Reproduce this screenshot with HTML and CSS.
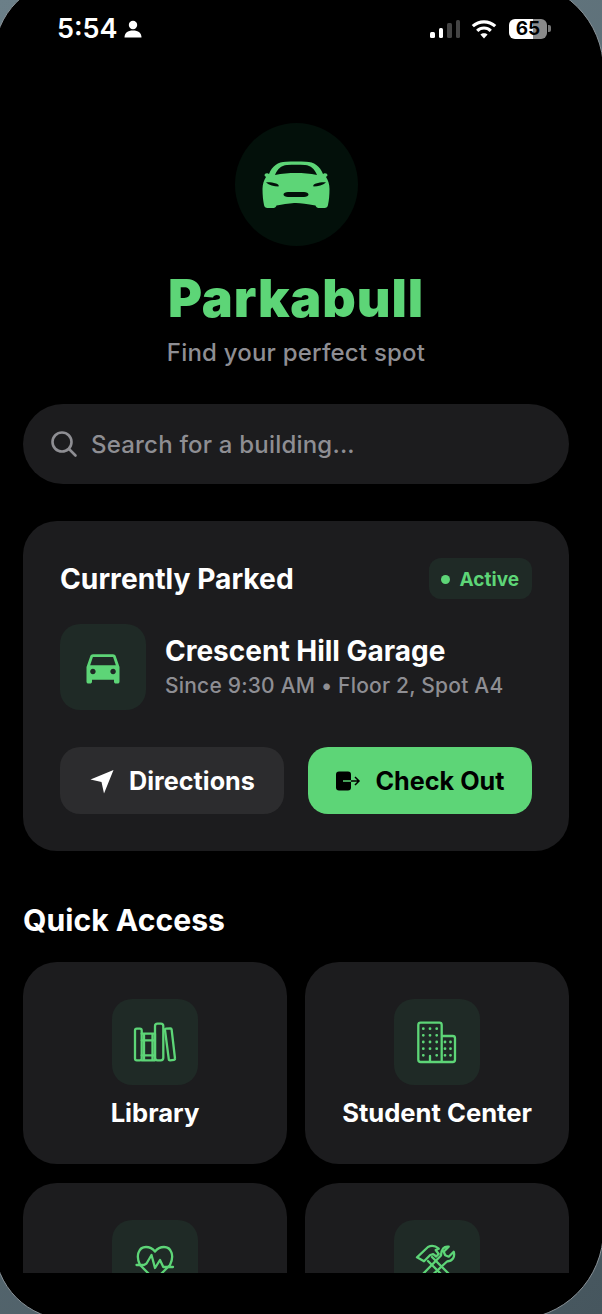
FILE: index.html
```html
<!DOCTYPE html>
<html>
<head>
  <title>Parkabull</title>
  <link rel="stylesheet" href="styles.css">
</head>
<body>
  <div class="phone">
    <div class="status-bar">
      <div class="status-left">
        <span class="clock">5:54</span>
        <svg class="person" viewBox="0 0 18 18"><circle cx="9" cy="5" r="4.2"/><path d="M.5 17.500c0-4.500 3.200-7 8.500-7s8.500 2.500 8.500 7z"/></svg>
      </div>
      <div class="status-right">
        <div class="signal">
          <i class="bar b1"></i><i class="bar b2"></i><i class="bar b3 off"></i><i class="bar b4 off"></i>
        </div>
        <svg class="wifi" viewBox="0 0 26 20"><path d="M1.800 7.200C4.700 4.500 8.600 2.800 13 2.800s8.300 1.700 11.200 4.400"/><path d="M6.200 11.800C8 10.100 10.400 9 13 9s5 1.100 6.800 2.800"/><path class="wifi-dot" d="M13 19.500l-3.600-3.900c1-.8 2.200-1.300 3.600-1.300s2.600.5 3.600 1.300z"/></svg>
        <div class="battery"><span>65</span></div>
        <i class="battery-nub"></i>
      </div>
    </div>

    <div class="screen">
      <div class="hero">
        <div class="logo">
          <svg width="70" height="48" viewBox="0 0 70 48"><path fill-rule="evenodd" d="M8 13C11 5 17 1 25 .8 31 .4 39 .4 45 .8 53 1 59 5 62 13l1-.5c2-.5 3.500.5 3.500 2l-1.500 1.500c2 3 3.500 7 3.500 12 0 6-.5 11-1.500 16-.3 2-1.500 3-3.500 3h-6c-1.500 0-2.500-1-3-2.500C46 43 40 42 35 42s-11 1-19.500 2.500C15 46 14 47 12.500 47h-6c-2 0-3.200-1-3.500-3C2 39 1.500 34 1.500 28c0-5 1.500-9 3.500-12L3.500 14.500c0-1.500 1.500-2.500 3.500-2zM14 14c7-1.500 14-2 21-2s14 .5 21 2c-2.500-6-6-9.500-12-10-6-.4-12-.4-18 0-6 .5-9.500 4-12 10zM5 21.500c3 2.500 8 4 12.500 4 .8-1.500-.5-2.500-2.500-3-3.500-.8-7-1.500-10-1zM65 21.500c-3 2.500-8 4-12.500 4-.8-1.500.5-2.500 2.500-3 3.500-.8 7-1.500 10-1zM27 31c-2.500 0-4.500 1-4.500 2.500S24.500 36 27 36h16c2.500 0 4.500-1 4.500-2.500S45.500 31 43 31z"/></svg>
        </div>
        <h1 class="brand">Parkabull</h1>
        <p class="tagline">Find your perfect spot</p>
      </div>

      <div class="search">
        <svg width="28" height="28" viewBox="0 0 28 28" fill="none" stroke="#8e8e93" stroke-width="2.600" stroke-linecap="round"><circle cx="12" cy="12" r="9.500"/><path d="M19 19l6.500 6.500"/></svg>
        <span>Search for a building...</span>
      </div>

      <div class="parked-card">
        <div class="parked-head">
          <h2>Currently Parked</h2>
          <div class="badge"><i class="dot"></i>Active</div>
        </div>
        <div class="parked-info">
          <div class="tile">
            <svg width="44" height="44" viewBox="0 0 24 24" fill="#5dd577"><path d="M18.920 6.010C18.720 5.420 18.160 5 17.500 5h-11c-.66 0-1.210.42-1.420 1.010L3 12v8c0 .55.45 1 1 1h1c.55 0 1-.45 1-1v-1h12v1c0 .55.45 1 1 1h1c.55 0 1-.45 1-1v-8l-2.080-5.990zM6.500 16c-.83 0-1.500-.67-1.500-1.500S5.670 13 6.500 13s1.500.67 1.500 1.500S7.330 16 6.500 16zm11 0c-.83 0-1.500-.67-1.500-1.500s.67-1.500 1.500-1.500 1.500.67 1.500 1.500-.67 1.500-1.500 1.500zM5 11l1.500-4.500h11L19 11H5z"/></svg>
          </div>
          <div>
            <div class="garage">Crescent Hill Garage</div>
            <div class="since">Since 9:30 AM • Floor 2, Spot A4</div>
          </div>
        </div>
        <div class="actions">
          <div class="btn btn-dark">
            <svg width="26" height="26" viewBox="0 0 26 26" fill="#fff"><path d="M1.500 11.500 24.500 2 15 25.500l-2.500-11.500z"/></svg>
            Directions
          </div>
          <div class="btn btn-green">
            <svg width="26" height="24" viewBox="0 0 26 24"><rect x="1" y="2.500" width="15" height="19" rx="3" fill="#000"/><path d="M8 12h16" stroke="#5dd577" stroke-width="1.500"/><path d="M16 12h8M20 8l4 4-4 4" fill="none" stroke="#000" stroke-width="1.500"/></svg>
            Check Out
          </div>
        </div>
      </div>

      <h2 class="section-title">Quick Access</h2>
      <div class="quick-grid">
        <div class="quick-card">
          <div class="tile">
            <svg class="line-icon" width="50" height="50" viewBox="0 0 50 50"><rect x="5" y="11.700" width="6.700" height="31.600" rx="1.800"/><path d="M11.700 16.700H25V43.300H11.700M11.700 23.300H25M11.700 38.300H25M14 16.700V43.300M22.500 16.700V43.300"/><rect x="25" y="6.700" width="8.300" height="36.600" rx="2.500"/><path d="M36 11.700l4.500-.4c.6 0 1 .3 1.100 1L45 41.500c.1.700-.2 1.200-.9 1.300l-4 .5c-.7.100-1.200-.3-1.300-1L35 13c-.1-.7.300-1.200 1-1.300z"/></svg>
          </div>
          <div class="quick-label">Library</div>
        </div>
        <div class="quick-card">
          <div class="tile">
            <svg class="line-icon" width="50" height="50" viewBox="0 0 50 50"><path d="M29.700 45V8c0-1.300-1-2.300-2.300-2.300H8.600C7.300 5.700 6.300 6.700 6.300 8v34.700c0 1.300 1 2.300 2.300 2.300zM29.700 19H40.700c1.300 0 2.300 1 2.300 2.300v21.400c0 1.300-1 2.300-2.300 2.300H29.700M18 39v6"/><path class="dots" d="M11.300 11.700h.01M18 11.700h.01M24.700 11.700h.01M11.300 18.300h.01M18 18.300h.01M24.700 18.300h.01M11.300 25h.01M18 25h.01M24.700 25h.01M11.300 31.700h.01M18 31.700h.01M24.700 31.700h.01M11.300 38.300h.01M24.700 38.300h.01M33 25h.01M38.500 25h.01M33 31.700h.01M38.500 31.700h.01M33 38.300h.01M38.500 38.300h.01"/></svg>
          </div>
          <div class="quick-label">Student Center</div>
        </div>
        <div class="quick-card">
          <div class="tile">
            <svg class="line-icon" width="50" height="50" viewBox="0 0 50 50"><path d="M10 27C5.500 18 8.500 9 16 9c4 0 7 2 9 4.500C27 11 30 9 34 9c7.500 0 10.500 9 6 18L25 42z"/><path d="M6.500 27H14l2.500-1.500 5-8.500L25 30l5-8 3.300 7H43"/></svg>
          </div>
        </div>
        <div class="quick-card">
          <div class="tile">
            <svg class="line-icon" width="50" height="50" viewBox="0 0 50 50"><path d="M5 19.300 16 9c3-1.500 7-1.500 10.700 1.700l-3 1.300 3 4-2.500 2.500-3-2.300-3 .8-6.200 6.300zM20 19l20 20-4 4-20-20"/><path d="M36.700 8.700l-5 5 1.500 3.500 3.500 1.500 5-5c1.500 5-1 9.800-6.700 9.800L15 42l-5-5 19-19.500c0-5.800 3-9.800 7.700-8.800z"/></svg>
          </div>
        </div>
      </div>
    </div>
  </div>
</body>
</html>
```

FILE: styles.css
```css
* {
  box-sizing: border-box;
}
html, body {
  height: 100%;
}
body {
  margin: 0;
  overflow: hidden;
  font-family: Inter, "Liberation Sans", sans-serif;
  color: #fff;
  background: linear-gradient(135deg, #6b7f88, #46565e);
}
.phone {
  width: 610px;
  height: 1340px;
  margin: -20px 0 0 -6px;
  padding: 19px 0 46px;
  background-color: #000;
  border: 1px solid #8a9399;
  border-radius: 75px 90px 90px 75px;
  display: flex;
  flex-direction: column;
}

/* status bar */
.status-bar {
  display: flex;
  justify-content: space-between;
  align-items: center;
  flex: none;
  height: 57px;
  padding: 0 52px 0 62px;
}
.status-left {
  display: flex;
  align-items: center;
  gap: 6px;
}
.clock {
  font-size: 27px;
  font-weight: 600;
}
.person {
  width: 18px;
  height: 18px;
  fill: #fff;
}
.status-right {
  display: flex;
  align-items: center;
}
.signal {
  display: flex;
  align-items: flex-end;
  gap: 4px;
  height: 19px;
  margin-right: 11px;
}
.bar {
  width: 4.500px;
  background-color: #fff;
  border-radius: 1.500px;
}
.bar.off {
  background-color: #444;
}
.b1 { height: 6px; }
.b2 { height: 10px; }
.b3 { height: 15px; }
.b4 { height: 18px; }
.wifi {
  width: 26px;
  height: 20px;
  margin-right: 12px;
  fill: none;
  stroke: #fff;
  stroke-width: 3.200;
}
.wifi-dot {
  fill: #fff;
  stroke: none;
}
.battery {
  width: 38px;
  height: 20px;
  border-radius: 6px;
  background: linear-gradient(90deg, #fff 62%, #8a8a8a 62%);
  color: #000;
  font-size: 19px;
  font-weight: 700;
  line-height: 20px;
  text-align: center;
}
.battery-nub {
  width: 3px;
  height: 7px;
  margin-left: 1px;
  background-color: #777;
  border-radius: 0 2px 2px 0;
}

/* scroll area */
.screen {
  flex: 1;
  overflow: hidden;
  padding: 0 34px 0 28px;
}
.hero {
  display: flex;
  flex-direction: column;
  align-items: center;
  padding-top: 66px;
}
.logo {
  width: 123px;
  height: 123px;
  border-radius: 50%;
  background-color: #03100a;
  display: flex;
  align-items: center;
  justify-content: center;
}
.logo svg {
  fill: #5dd577;
}
.brand {
  margin: 18px 0 0;
  font-size: 52px;
  line-height: 70px;
  font-weight: 900;
  letter-spacing: .9px;
  color: #5dd577;
}
.tagline {
  margin: 4px 0 -1px;
  font-size: 24px;
  line-height: 30px;
  font-weight: 500;
  letter-spacing: .2px;
  color: #8e8e93;
}

.search {
  display: flex;
  align-items: center;
  gap: 13px;
  height: 80px;
  margin-top: 37px;
  padding-left: 27px;
  border-radius: 40px;
  background-color: #1c1c1e;
  color: #8e8e93;
  font-size: 24px;
  font-weight: 500;
  letter-spacing: .2px;
}

/* currently parked */
.parked-card {
  height: 330px;
  margin-top: 37px;
  padding: 37px;
  border-radius: 34px;
  background-color: #1c1c1e;
}
.parked-head {
  display: flex;
  justify-content: space-between;
  align-items: center;
  height: 41px;
}
.parked-head h2 {
  margin: 0;
  font-size: 28.2px;
  font-weight: 700;
}
.badge {
  display: flex;
  align-items: center;
  gap: 10px;
  height: 41px;
  padding: 1px 13px 0 12px;
  border-radius: 12px;
  background-color: #1f2a26;
  color: #5dd577;
  font-size: 19px;
  font-weight: 700;
}
.dot {
  width: 9px;
  height: 9px;
  border-radius: 50%;
  background-color: #5dd577;
}
.tile {
  flex: none;
  width: 86px;
  height: 86px;
  border-radius: 20px;
  background-color: #1f2a26;
  display: flex;
  align-items: center;
  justify-content: center;
}
.parked-info {
  display: flex;
  align-items: center;
  gap: 19px;
  margin-top: 25px;
}
.garage {
  font-size: 28px;
  font-weight: 700;
  line-height: 34px;
}
.since {
  margin-top: 4px;
  font-size: 21px;
  line-height: 28px;
  font-weight: 500;
  letter-spacing: .2px;
  color: #8e8e93;
}
.actions {
  display: grid;
  grid-template-columns: 1fr 1fr;
  gap: 24px;
  margin-top: 37px;
}
.btn {
  display: flex;
  align-items: center;
  justify-content: center;
  gap: 14px;
  height: 67px;
  border-radius: 20px;
  font-size: 25.2px;
  font-weight: 700;
}
.btn-dark {
  background-color: #2c2c2e;
}
.btn-green {
  background-color: #5dd577;
  color: #000;
}

/* quick access */
.section-title {
  margin: 50px 0 0;
  font-size: 30.2px;
  line-height: 38px;
  font-weight: 700;
}
.quick-grid {
  display: grid;
  grid-template-columns: 1fr 1fr;
  gap: 19px 18px;
  margin-top: 23px;
}
.quick-card {
  height: 202px;
  padding-top: 37px;
  border-radius: 34px;
  background-color: #1c1c1e;
  display: flex;
  flex-direction: column;
  align-items: center;
}
.quick-label {
  margin-top: 13px;
  font-size: 25.6px;
  line-height: 30px;
  font-weight: 700;
}
.line-icon {
  fill: none;
  stroke: #5dd577;
  stroke-width: 2.300;
  stroke-linejoin: round;
  stroke-linecap: round;
}
.line-icon .dots {
  stroke-width: 2.800;
}
```
